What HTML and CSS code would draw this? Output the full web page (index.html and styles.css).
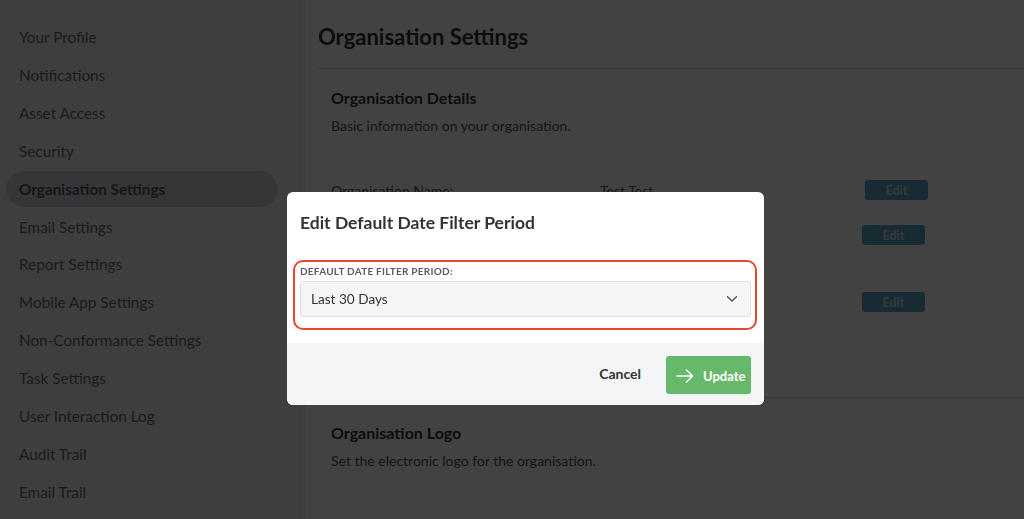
FILE: index.html
```html
<!DOCTYPE html>
<html lang="en">
<head>
<meta charset="utf-8">
<title>Organisation Settings</title>
<link rel="stylesheet" href="styles.css">
</head>
<body>
<div class="page">
  <aside class="sidebar">
    <nav class="nav">
      <a class="nav-item">Your Profile</a>
      <a class="nav-item">Notifications</a>
      <a class="nav-item">Asset Access</a>
      <a class="nav-item">Security</a>
      <a class="nav-item active">Organisation Settings</a>
      <a class="nav-item">Email Settings</a>
      <a class="nav-item">Report Settings</a>
      <a class="nav-item">Mobile App Settings</a>
      <a class="nav-item">Non-Conformance Settings</a>
      <a class="nav-item">Task Settings</a>
      <a class="nav-item">User Interaction Log</a>
      <a class="nav-item">Audit Trail</a>
      <a class="nav-item">Email Trail</a>
    </nav>
  </aside>
  <main class="main">
    <header class="page-head"><h1>Organisation Settings</h1></header>
    <section class="section">
      <h2>Organisation Details</h2>
      <p class="desc">Basic information on your organisation.</p>
      <div class="rows">
        <div class="row row-1">
          <span class="label">Organisation Name:</span>
          <span class="value">Test Test</span>
          <button class="edit">Edit</button>
        </div>
        <div class="row row-2">
          <span class="label">Default Date Filter Period:</span>
          <span class="value">Last 30 Days</span>
          <button class="edit">Edit</button>
        </div>
        <div class="row row-3">
          <span class="label">Time Zone:</span>
          <span class="value">UTC</span>
          <button class="edit">Edit</button>
        </div>
      </div>
    </section>
    <section class="section logo-section">
      <h2>Organisation Logo</h2>
      <p class="desc">Set the electronic logo for the organisation.</p>
    </section>
  </main>
</div>

<div class="backdrop"></div>

<div class="modal">
  <div class="modal-head">Edit Default Date Filter Period</div>
  <div class="field-box">
    <div class="field-label">DEFAULT DATE FILTER PERIOD:</div>
    <div class="select">
      <span>Last 30 Days</span>
      <svg class="chev" width="12" height="8" viewBox="0 0 12 8"><path d="M1.5 1.8 L6 6 L10.5 1.8" fill="none" stroke="#555" stroke-width="1.4" stroke-linecap="round" stroke-linejoin="round"/></svg>
    </div>
  </div>
  <div class="modal-foot">
    <button class="cancel">Cancel</button>
    <button class="update">
      <svg width="18" height="14" viewBox="0 0 18 14"><path d="M1 7 H16.5 M10.5 1 L16.5 7 L10.5 13" fill="none" stroke="#fff" stroke-width="1.5" stroke-linecap="round" stroke-linejoin="round"/></svg>
      <span>Update</span>
    </button>
  </div>
</div>
</body>
</html>
```

FILE: styles.css
```css
* { box-sizing: border-box; }
html, body { margin: 0; padding: 0; }
body {
  font-family: Lato, "Open Sans", "Liberation Sans", sans-serif;
  width: 1024px;
  height: 519px;
  overflow: hidden;
  background: #ffffff;
}
.page {
  display: flex;
  height: 519px;
}
.sidebar {
  width: 304px;
  flex: none;
  background: #f0f0f0;
  border-right: 1px solid #f6f6f6;
  padding: 18px 25px 0 6px;
}
.nav { display: flex; flex-direction: column; }
.nav-item {
  display: block;
  height: 37.9px;
  line-height: 38px;
  padding-left: 13px;
  font-size: 15.3px;
  color: #6a6a6a;
  border-radius: 19px;
}
.nav-item.active {
  background: #d1d1d9;
  font-weight: 700;
  height: 36px;
  line-height: 36px;
  margin: 1px 0;
  color: #555;
}
.main {
  flex: 1;
  padding-left: 13px;
  background: #ffffff;
  border-left: 1px solid #e6e6e6;
}
.page-head {
  height: 69px;
  border-bottom: 1px solid #dcdcdc;
  display: flex;
  align-items: center;
  padding-top: 4px;
}
.page-head h1 {
  margin: 0;
  font-size: 22px;
  font-weight: 700;
  color: #333;
}
.section { padding-left: 13px; }
.section h2 {
  margin: 18px 0 0;
  font-size: 16px;
  line-height: 22px;
  font-weight: 700;
  color: #333;
}
.desc {
  margin: 8px 0 0;
  font-size: 14px;
  line-height: 18px;
  color: #555;
}
.rows { display: flex; flex-direction: column; margin-top: 45px; height: 217px; }
.row {
  display: grid;
  grid-template-columns: 269px 262px 80px;
  align-items: center;
  font-size: 14px;
  color: #555;
  height: 20px;
}
.row-2 { margin-top: 25px; }
.row-3 { margin-top: 47px; }
.row-1 .edit { margin-left: 3px; }
.edit {
  width: 63px;
  height: 20px;
  border: none;
  border-radius: 3px;
  background: #5fa3c6;
  color: #d2dade;
  font-family: inherit;
  font-size: 12.5px;
  font-weight: 700;
  padding: 0;
}
.logo-section {
  border-top: 1px solid #dcdcdc;
}
.logo-section h2 { margin-top: 24px; }

.backdrop {
  position: fixed;
  inset: 0;
  background: rgba(0, 0, 0, 0.74);
}
.modal {
  position: absolute;
  left: 287px;
  top: 192px;
  width: 477px;
  height: 213px;
  background: #fff;
  border-radius: 6px;
  overflow: hidden;
  display: flex;
  flex-direction: column;
}
.modal-head {
  height: 68px;
  padding: 20px 13px 0;
  font-size: 17.5px;
  line-height: 22px;
  font-weight: 700;
  color: #333;
}
.field-box {
  margin: 0 7px 0 6px;
  border: 2px solid #e8462d;
  border-radius: 10px;
  padding: 3px 4px 11px 5px;
  height: 70px;
}
.field-label {
  font-size: 10px;
  line-height: 12px;
  font-weight: 700;
  color: #5b5b5b;
  letter-spacing: 0.25px;
}
.select {
  margin-top: 4px;
  height: 36px;
  background: #f4f5f7;
  border: 1px solid #dcdfe3;
  border-radius: 3px;
  display: flex;
  align-items: center;
  justify-content: space-between;
  padding: 0 12px 0 10px;
  font-size: 13.6px;
  color: #333;
}
.modal-foot {
  margin-top: 13px;
  flex: 1;
  background: #f4f5f7;
  display: flex;
  align-items: center;
  justify-content: flex-end;
  padding: 0 13px 0 0;
  gap: 25px;
}
.cancel {
  border: none;
  background: none;
  padding: 0;
  font-family: inherit;
  font-size: 14px;
  font-weight: 700;
  color: #333;
  margin-top: -1px;
}
.update {
  width: 85px;
  height: 38px;
  border: none;
  border-radius: 3px;
  background: #66b96b;
  color: #fff;
  font-family: inherit;
  font-size: 13px;
  font-weight: 700;
  display: flex;
  align-items: center;
  gap: 9px;
  padding: 1px 0 0 10px;
  margin-top: 2px;
}
```
